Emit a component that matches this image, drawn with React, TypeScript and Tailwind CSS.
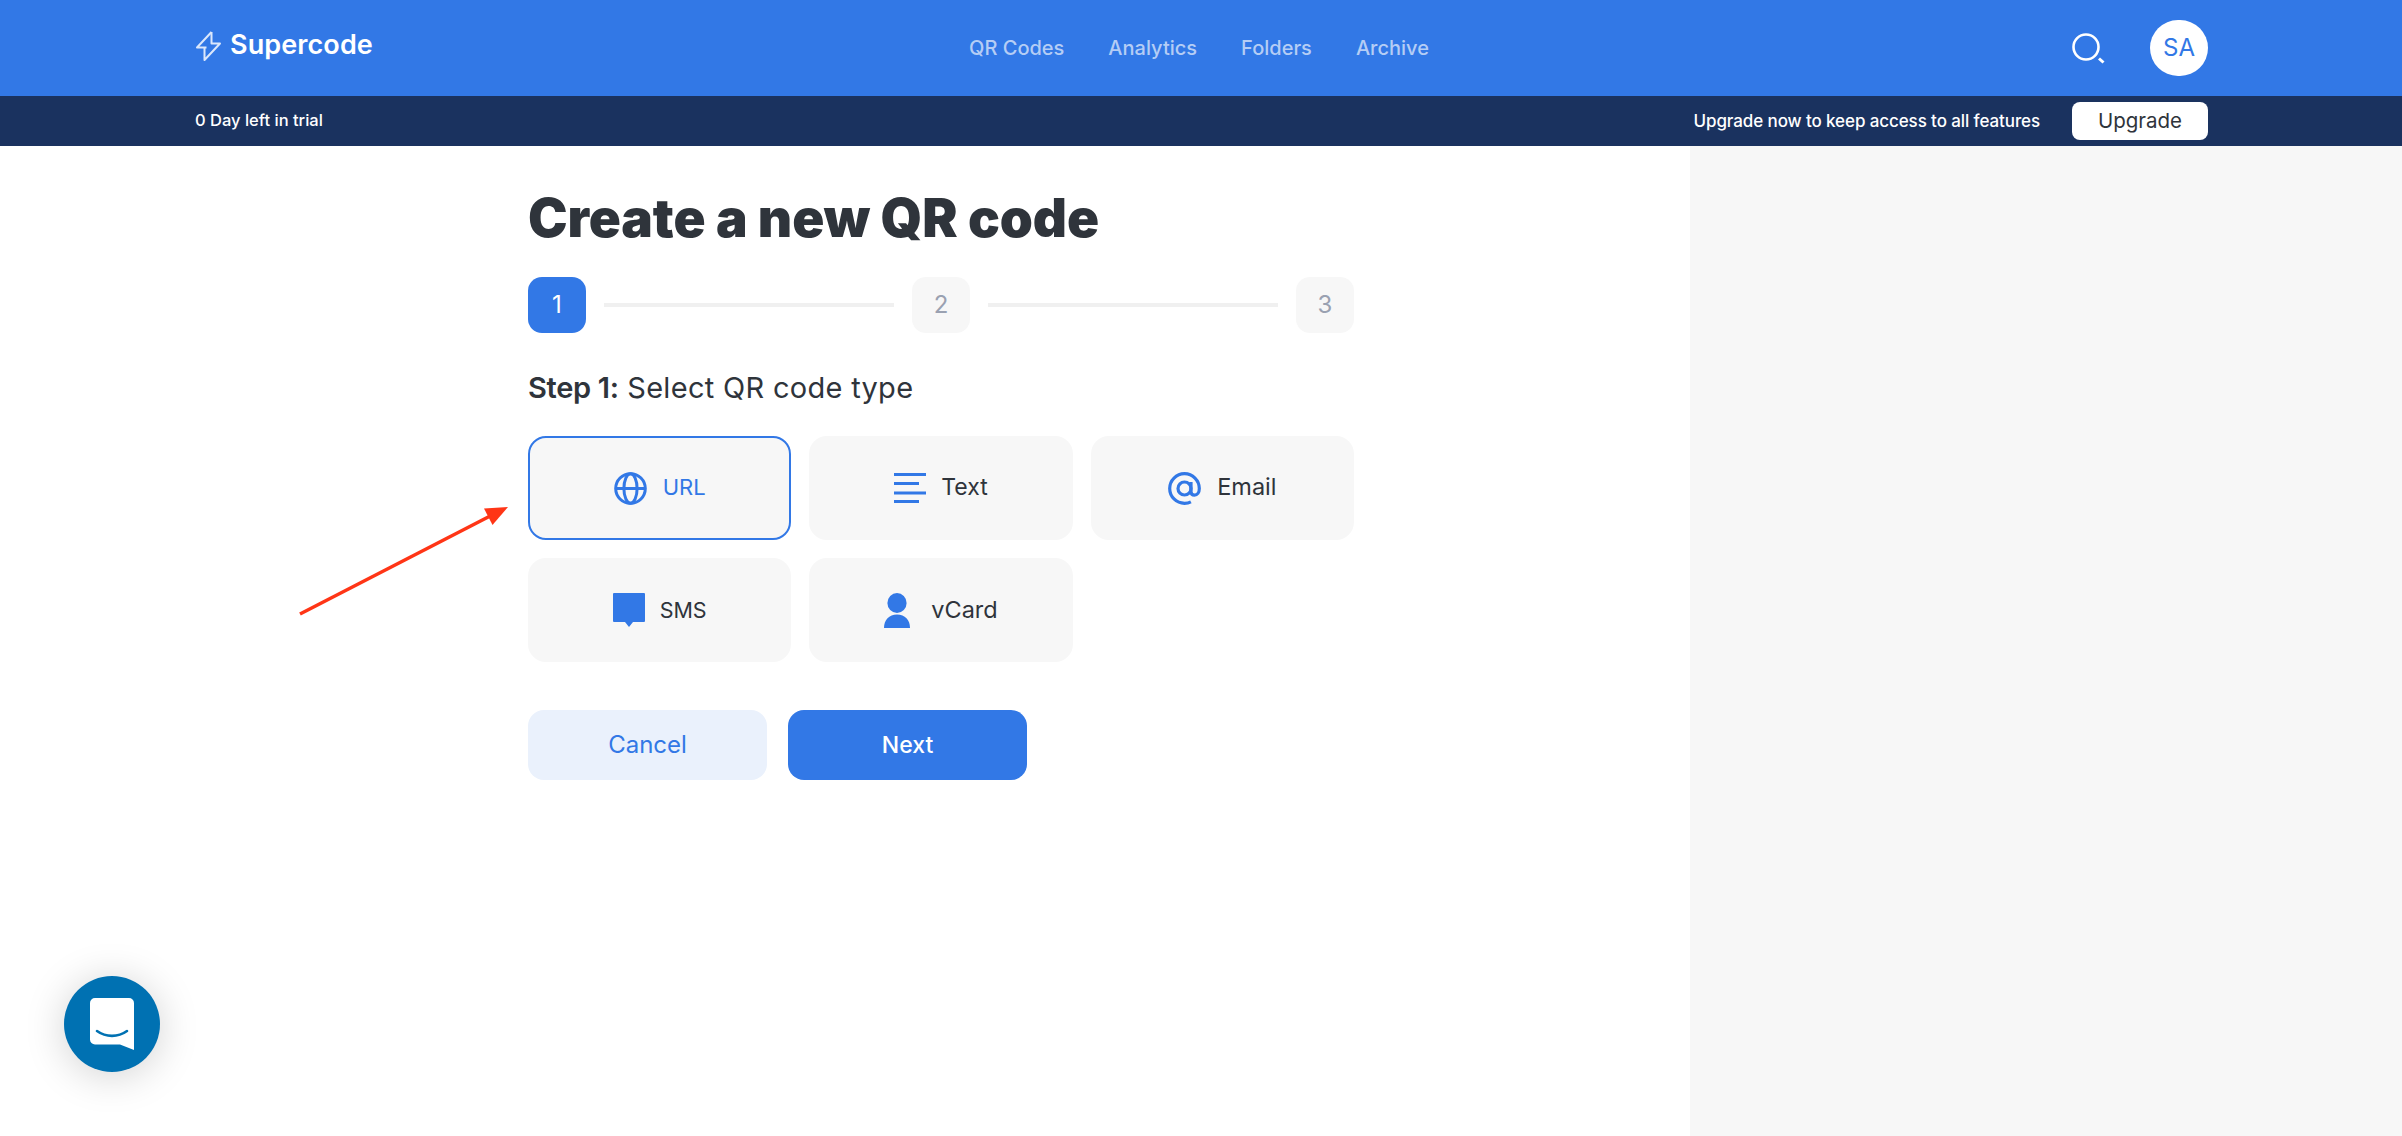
import { useState } from "react"

const navLinks = ["QR Codes", "Analytics", "Folders", "Archive"]

function BoltIcon() {
  return (
    <svg width="26" height="32" viewBox="0 0 26 32" fill="none" stroke="#dbe7fb" strokeWidth="2" strokeLinejoin="round">
      <path d="M16.5 2 2 17.5h9.5" />
      <path d="M16.5 2v11.5H25L9.5 30V17.5" />
    </svg>
  )
}

function SearchIcon() {
  return (
    <svg width="34" height="32" viewBox="0 0 34 32" fill="none" stroke="white">
      <circle cx="15" cy="15" r="12.5" strokeWidth="2.6" />
      <path d="M28 26.5l4.5 4" strokeWidth="3" />
    </svg>
  )
}

function GlobeIcon() {
  return (
    <svg width="33" height="33" viewBox="0 0 33 33" fill="none" stroke="#3278e6" strokeWidth="3">
      <circle cx="16.5" cy="16.5" r="14.8" />
      <ellipse cx="16.5" cy="16.5" rx="6.6" ry="14.8" />
      <path d="M2 16.5h29" />
    </svg>
  )
}

function LinesIcon() {
  return (
    <svg width="32" height="32" viewBox="0 0 32 32" fill="#3278e6">
      <rect x="0" y="1" width="32" height="3" />
      <rect x="0" y="10" width="25" height="3" />
      <rect x="0" y="19.5" width="32" height="3" />
      <rect x="0" y="28" width="25" height="3" />
    </svg>
  )
}

function AtIcon() {
  return (
    <svg width="33" height="33" viewBox="0 0 33 33" fill="none" stroke="#3278e6" strokeWidth="3.2">
      <circle cx="16.5" cy="16.5" r="6.5" />
      <path d="M23 10v9.5c0 2.4 1.6 3.7 3.5 3.7 2.7 0 4.8-2.6 4.8-6.7C31.3 8.300 24.700 1.700 16.500 1.700S1.700 8.300 1.700 16.500 8.300 31.300 16.500 31.300c2.300 0 4.400-.4 6.400-1.400" />
    </svg>
  )
}

function SmsIcon() {
  return (
    <svg width="32" height="34" viewBox="0 0 32 34" fill="#3278e6">
      <path d="M1 0h30a1 1 0 0 1 1 1v27a1 1 0 0 1-1 1H20l-4 5-4-5H1a1 1 0 0 1-1-1V1a1 1 0 0 1 1-1z" />
    </svg>
  )
}

function PersonIcon() {
  return (
    <svg width="26" height="35" viewBox="0 0 26 35" fill="#3278e6">
      <ellipse cx="13" cy="10" rx="9.600" ry="10" />
      <path d="M0 35c0-8 5-13.500 13-13.500S26 27 26 35z" />
    </svg>
  )
}

function ChatIcon() {
  return (
    <svg width="44" height="52" viewBox="0 0 44 52">
      <path d="M5 0h34a5 5 0 0 1 5 5v47l-14-5.500H5a5 5 0 0 1-5-5V5a5 5 0 0 1 5-5z" fill="white" />
      <path d="M7 33c9 6.500 21 6.500 30 0" fill="none" stroke="#0071b2" strokeWidth="2.600" strokeLinecap="round" />
    </svg>
  )
}

function RedArrow() {
  return (
    <svg className="absolute left-[296px] top-[500px]" width="216" height="120" viewBox="0 0 216 120">
      <path d="M4 114 200 13" stroke="#ff3516" strokeWidth="3.5" />
      <path d="M212 7 188 8.500l8.500 16.500z" fill="#ff3516" />
    </svg>
  )
}

const types = [
  { label: "URL", icon: <GlobeIcon />, className: "gap-[16px] text-[22px]", labelClass: "pb-[2px]" },
  { label: "Text", icon: <LinesIcon />, className: "gap-[15px] text-[23px]", labelClass: "pb-[2px]" },
  { label: "Email", icon: <AtIcon />, className: "gap-[16px] text-[23.500px]", labelClass: "pb-[2px]" },
  { label: "SMS", icon: <SmsIcon />, className: "gap-[15px] text-[21.500px]", labelClass: "" },
  { label: "vCard", icon: <PersonIcon />, className: "gap-[21px] text-[23.500px]", labelClass: "" },
]

export default function App() {
  const [selected, setSelected] = useState("URL")

  return (
    <div className="relative h-[1136px] overflow-hidden bg-white font-['Inter',sans-serif] text-[#2f343b]">
      <header className="flex h-[96px] items-center justify-between bg-[#3278e6] pl-[195px] pr-[194px]">
        <div className="flex w-[400px] items-center gap-[9px] pb-[5px]">
          <BoltIcon />
          <span className="text-[27px] font-semibold tracking-[0.1px] text-white">Supercode</span>
        </div>
        <nav className="mr-[5px] flex gap-[44px] pb-[1px] text-[20px] font-medium text-[#b5cdf5]">
          {navLinks.map((link) => (
            <a key={link} className="cursor-pointer">{link}</a>
          ))}
        </nav>
        <div className="flex w-[400px] items-center justify-end gap-[45px]">
          <SearchIcon />
          <div className="flex h-[56px] w-[58px] items-center justify-center rounded-full bg-white text-[24px] text-[#3278e6]">SA</div>
        </div>
      </header>

      <div className="flex h-[50px] items-center justify-between bg-[#1a325f] pl-[195px] pr-[194px] text-white">
        <span className="pb-[2px] text-[16.500px] font-medium">0 Day left in trial</span>
        <div className="flex items-center gap-[32px]">
          <span className="pt-[1px] text-[17px] font-medium tracking-[-0.1px]">Upgrade now to keep access to all features</span>
          <button className="h-[38px] w-[136px] rounded-[8px] bg-white text-[20.500px] text-[#2f343b]">Upgrade</button>
        </div>
      </div>

      <div className="flex h-[990px]">
        <main className="flex-1 pl-[528px] pt-[40px]">
          <div className="w-[826px]">
            <h1 className="text-[53px] font-black leading-[64px] tracking-[-0.1px]">Create a new QR code</h1>

            <div className="mt-[27px] flex items-center">
              <div className="flex h-[56px] w-[58px] items-center justify-center rounded-[14px] bg-[#3278e6] text-[24px] text-white">1</div>
              <div className="mx-[18px] h-[4px] flex-1 bg-[#f0f0f0]" />
              <div className="flex h-[56px] w-[58px] items-center justify-center rounded-[14px] bg-[#f7f7f7] text-[24px] text-[#9aa1b1]">2</div>
              <div className="mx-[18px] h-[4px] flex-1 bg-[#f0f0f0]" />
              <div className="flex h-[56px] w-[58px] items-center justify-center rounded-[14px] bg-[#f7f7f7] text-[24px] text-[#9aa1b1]">3</div>
            </div>

            <h2 className="mt-[33px] text-[29px] leading-[44px] tracking-[0.3px]">
              <span className="font-semibold tracking-[-0.3px]">Step 1:</span> Select QR code type
            </h2>

            <div className="mt-[26px] grid grid-cols-3 gap-x-[18px] gap-y-[18px]">
              {types.map((type) => (
                <button
                  key={type.label}
                  onClick={() => setSelected(type.label)}
                  className={
                    type.label === selected
                      ? `flex h-[104px] items-center justify-center rounded-[18px] border-2 border-[#3278e6] bg-[#f7f7f7] text-[#3278e6] ${type.className}`
                      : `flex h-[104px] items-center justify-center rounded-[18px] bg-[#f7f7f7] ${type.className}`
                  }
                >
                  {type.icon}
                  <span className={type.labelClass}>{type.label}</span>
                </button>
              ))}
            </div>

            <div className="mt-[48px] flex gap-[21px]">
              <button className="h-[70px] w-[239px] rounded-[16px] bg-[#eaf1fc] text-[24px] text-[#3278e6]">Cancel</button>
              <button className="h-[70px] w-[239px] rounded-[16px] bg-[#3278e6] text-[23px] font-medium text-white">Next</button>
            </div>
          </div>
        </main>
        <aside className="w-[712px] bg-[#f7f7f7]" />
      </div>

      <RedArrow />

      <button className="absolute left-[64px] top-[976px] flex h-[96px] w-[96px] items-center justify-center rounded-full bg-[#0071b2] shadow-[0_4px_40px_rgba(0,0,0,0.18)]">
        <ChatIcon />
      </button>
    </div>
  )
}
